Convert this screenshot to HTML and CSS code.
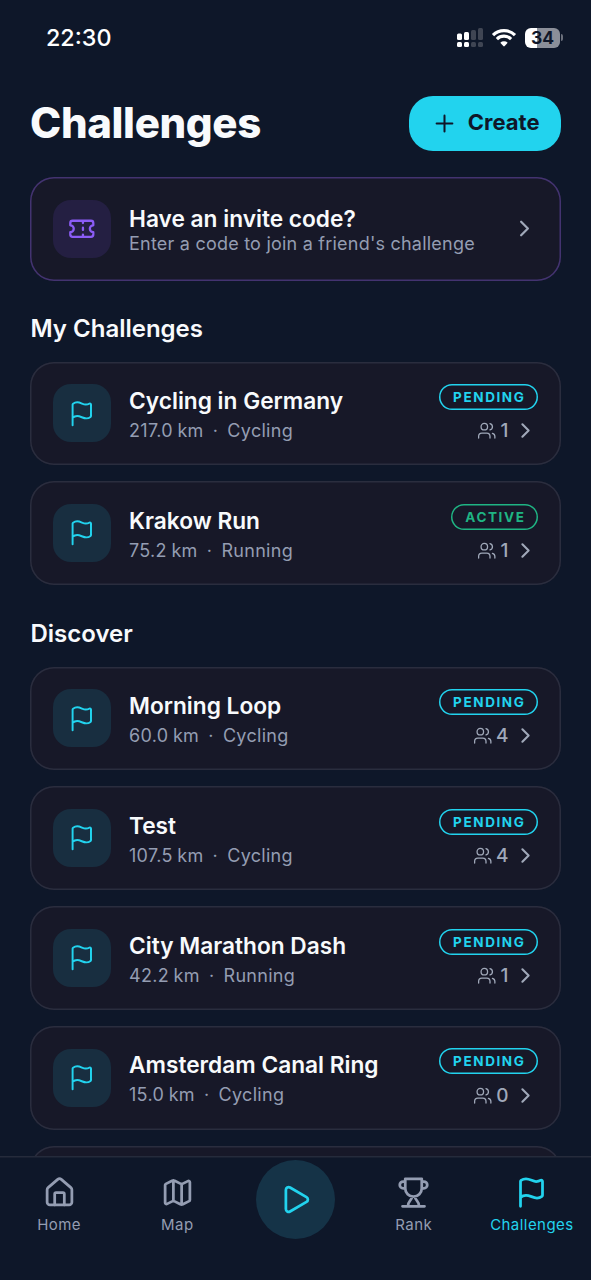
FILE: index.html
```html
<!DOCTYPE html>
<html lang="en">
<head>
<meta charset="utf-8">
<meta name="viewport" content="width=device-width">
<title>Challenges</title>
<link rel="stylesheet" href="styles.css">
</head>
<body>
<svg class="sprite" aria-hidden="true">
  <symbol id="flag" viewBox="0 0 24 24"><path d="M4 22V4a1 1 0 0 1 .4-.8A6 6 0 0 1 8 2c3 0 5 2 7.333 2q2 0 3.067-.8A1 1 0 0 1 20 4v10a1 1 0 0 1-.4.8A6 6 0 0 1 16 16c-3 0-5-2-8-2a6 6 0 0 0-4 1.528"/></symbol>
  <symbol id="ticket" viewBox="0 0 24 24"><path d="M2 9a3 3 0 0 1 0 6v2a2 2 0 0 0 2 2h16a2 2 0 0 0 2-2v-2a3 3 0 0 1 0-6V7a2 2 0 0 0-2-2H4a2 2 0 0 0-2 2ZM13 5v2M13 11v2M13 17v2"/></symbol>
  <symbol id="users" viewBox="0 0 24 24"><path d="M16 21v-2a4 4 0 0 0-4-4H6a4 4 0 0 0-4 4v2M16 3.128a4 4 0 0 1 0 7.744M22 21v-2a4 4 0 0 0-3-3.87"/><circle cx="9" cy="7" r="4"/></symbol>
  <symbol id="chevron" viewBox="0 0 24 24"><path d="m9 18 6-6-6-6"/></symbol>
  <symbol id="plus" viewBox="0 0 24 24"><path d="M5 12h14M12 5v14"/></symbol>
  <symbol id="home" viewBox="0 0 24 24"><path d="M15.500 21v-8a1 1 0 0 0-1-1h-5a1 1 0 0 0-1 1v8"/><path d="M3 10a2 2 0 0 1 .709-1.528l7-6a2 2 0 0 1 2.582 0l7 6A2 2 0 0 1 21 10v9a2 2 0 0 1-2 2H5a2 2 0 0 1-2-2z"/></symbol>
  <symbol id="map" viewBox="0 0 24 24"><path d="M14.106 5.553a2 2 0 0 0 1.788 0l3.659-1.83A1 1 0 0 1 21 4.619v12.764a1 1 0 0 1-.553.894l-4.553 2.277a2 2 0 0 1-1.788 0l-4.212-2.106a2 2 0 0 0-1.788 0l-3.659 1.83A1 1 0 0 1 3 19.381V6.618a1 1 0 0 1 .553-.894l4.553-2.277a2 2 0 0 1 1.788 0zM15 5.764v15M9 3.236v15"/></symbol>
  <symbol id="play" viewBox="0 0 24 24"><path d="M5 5a2 2 0 0 1 3.008-1.728l11.997 6.998a2 2 0 0 1 .003 3.458l-12 7A2 2 0 0 1 5 19z"/></symbol>
  <symbol id="trophy" viewBox="0 0 24 24"><path d="M11 15c-.2 1.500-.9 2.400-1.700 3.300S8 20.300 8 22M13 15c.2 1.500.9 2.400 1.700 3.300S16 20.300 16 22M18 9h1.500a2.500 2.500 0 0 0 0-5H18M4 22h16M6 9a6 6 0 0 0 12 0V2H6zM6 9H4.500a2.500 2.500 0 0 1 0-5H6"/></symbol>
</svg>

<div class="screen">
  <div class="status">
    <span class="clock">22:30</span>
    <div class="indicators">
      <svg class="signal" viewBox="0 0 26 19">
        <g fill="#fff"><rect x="0" y="5.500" width="5" height="6.500" rx="1.500"/><rect x="7" y="4" width="5" height="8" rx="1.500"/><rect x="0" y="14" width="5" height="5" rx="1.500"/><rect x="7" y="14" width="5" height="5" rx="1.500"/></g>
        <g fill="#3f4553"><rect x="14" y="2" width="5" height="10" rx="1.500"/><rect x="21" y="0" width="5" height="12" rx="1.500"/><rect x="14" y="14" width="5" height="5" rx="1.500"/><rect x="21" y="14" width="5" height="5" rx="1.500"/></g>
      </svg>
      <svg class="wifi" viewBox="0 0 24 18"><path d="M1 6.100a15.800 15.800 0 0 1 22 0M4.900 10.100a10.200 10.200 0 0 1 14.200 0"/><path class="dot" d="M8.300 13.800a5.400 5.400 0 0 1 7.400 0l-3 3.300a1 1 0 0 1-1.400 0z"/></svg>
      <div class="power"><div class="battery">34</div><i class="tip"></i></div>
    </div>
  </div>

  <main class="content">
    <header class="head">
      <h1>Challenges</h1>
      <button class="create"><svg class="icon plus"><use href="#plus"/></svg><span>Create</span></button>
    </header>

    <section class="card invite">
      <div class="tile violet"><svg class="icon"><use href="#ticket"/></svg></div>
      <div class="info"><h3>Have an invite code?</h3><p>Enter a code to join a friend's challenge</p></div>
      <svg class="icon go"><use href="#chevron"/></svg>
    </section>

    <h2>My Challenges</h2>
    <div class="list">
      <article class="card"><div class="tile"><svg class="icon"><use href="#flag"/></svg></div><div class="info"><h3>Cycling in Germany</h3><p>217.0 km&nbsp; ·&nbsp; Cycling</p></div><div class="side"><span class="badge">PENDING</span><div class="meta"><svg class="icon users"><use href="#users"/></svg><b>1</b><svg class="icon next"><use href="#chevron"/></svg></div></div></article>
      <article class="card"><div class="tile"><svg class="icon"><use href="#flag"/></svg></div><div class="info"><h3>Krakow Run</h3><p>75.2 km&nbsp; ·&nbsp; Running</p></div><div class="side"><span class="badge active">ACTIVE</span><div class="meta"><svg class="icon users"><use href="#users"/></svg><b>1</b><svg class="icon next"><use href="#chevron"/></svg></div></div></article>
    </div>

    <h2>Discover</h2>
    <div class="list">
      <article class="card"><div class="tile"><svg class="icon"><use href="#flag"/></svg></div><div class="info"><h3>Morning Loop</h3><p>60.0 km&nbsp; ·&nbsp; Cycling</p></div><div class="side"><span class="badge">PENDING</span><div class="meta"><svg class="icon users"><use href="#users"/></svg><b>4</b><svg class="icon next"><use href="#chevron"/></svg></div></div></article>
      <article class="card"><div class="tile"><svg class="icon"><use href="#flag"/></svg></div><div class="info"><h3>Test</h3><p>107.5 km&nbsp; ·&nbsp; Cycling</p></div><div class="side"><span class="badge">PENDING</span><div class="meta"><svg class="icon users"><use href="#users"/></svg><b>4</b><svg class="icon next"><use href="#chevron"/></svg></div></div></article>
      <article class="card"><div class="tile"><svg class="icon"><use href="#flag"/></svg></div><div class="info"><h3>City Marathon Dash</h3><p>42.2 km&nbsp; ·&nbsp; Running</p></div><div class="side"><span class="badge">PENDING</span><div class="meta"><svg class="icon users"><use href="#users"/></svg><b>1</b><svg class="icon next"><use href="#chevron"/></svg></div></div></article>
      <article class="card"><div class="tile"><svg class="icon"><use href="#flag"/></svg></div><div class="info"><h3>Amsterdam Canal Ring</h3><p>15.0 km&nbsp; ·&nbsp; Cycling</p></div><div class="side"><span class="badge">PENDING</span><div class="meta"><svg class="icon users"><use href="#users"/></svg><b>0</b><svg class="icon next"><use href="#chevron"/></svg></div></div></article>
      <article class="card"></article>
    </div>
  </main>

  <nav class="tabs">
    <a class="tab"><svg class="icon"><use href="#home"/></svg><span>Home</span></a>
    <a class="tab"><svg class="icon"><use href="#map"/></svg><span>Map</span></a>
    <a class="tab play"><span class="disc"><svg class="icon"><use href="#play"/></svg></span></a>
    <a class="tab"><svg class="icon"><use href="#trophy"/></svg><span>Rank</span></a>
    <a class="tab current"><svg class="icon"><use href="#flag"/></svg><span>Challenges</span></a>
  </nav>
</div>
</body>
</html>
```

FILE: styles.css
```css
* { box-sizing: border-box; }
body { margin: 0; background: #0e1729; color: #f8fafc; font-family: Inter, "Liberation Sans", sans-serif; }
h1, h2, h3, p { margin: 0; white-space: nowrap; }
.sprite { display: none; }
.icon { display: block; flex: none; fill: none; stroke: currentColor; stroke-width: 2; stroke-linecap: round; stroke-linejoin: round; }

.screen { display: flex; flex-direction: column; width: 591px; height: 1280px; overflow: hidden; }

.status { flex: none; display: flex; justify-content: space-between; align-items: center; height: 75px; padding: 0 28px 0 46px; }
.clock { font-size: 23.300px; font-weight: 500; line-height: 28px; color: #fff; }
.indicators { display: flex; align-items: center; gap: 9px; }
.signal { width: 26px; height: 19px; }
.wifi { width: 24px; height: 18px; overflow: visible; fill: none; stroke: #fff; stroke-width: 3.2; }
.wifi .dot { fill: #fff; stroke: none; }
.power { display: flex; align-items: center; gap: 1px; }
.battery { width: 35px; height: 20px; border-radius: 6px; background: linear-gradient(90deg, #fff 34%, #8b8f99 34%); color: #0f1729; font-size: 17.500px; font-weight: 700; line-height: 20px; text-align: center; }
.tip { width: 2px; height: 7px; border-radius: 0 2px 2px 0; background: #6b707c; }

.content { flex: 1; min-height: 0; overflow: hidden; padding: 20px 30.500px 0 30px; }
.head { display: flex; justify-content: space-between; align-items: center; height: 56px; }
h1 { font-size: 42px; font-weight: 800; line-height: 56px; letter-spacing: -.35px; }
.create { display: flex; align-items: center; gap: 10px; height: 55px; margin-top: 0; padding: 0 21px 0 22px; border: 0; border-radius: 24px; background: #22d3ee; color: #0f1729; font: 700 22px/26px Inter, sans-serif; }
.plus { width: 27px; height: 27px; stroke-width: 1.8; }
.create span { margin-top: -2px; }

h2 { margin: 32px 0 17px; padding-left: .500px; font-size: 24px; font-weight: 600; line-height: 32px; }
.list { display: flex; flex-direction: column; gap: 16px; }
.list + h2 { margin: 32.500px 0 17px; }
.card { flex: none; display: flex; align-items: center; height: 103.800px; padding: 0 22.500px 0 23px; border-radius: 24px; background: #171828; box-shadow: inset 0 0 0 1.500px #2a2d3e; }
.invite { height: 103.500px; margin-top: 26px; box-shadow: inset 0 0 0 1.500px #433370; }
.tile { flex: none; display: flex; align-items: center; justify-content: center; width: 58px; height: 58px; border-radius: 18px; background: #182e40; color: #22d3ee; }
.tile .icon { width: 27.600px; height: 27.600px; stroke-width: 1.700; }
.violet { background: #241f42; color: #8b5cf6; }
.violet .icon { stroke-width: 2; }
.info { flex: 1; margin: 4px 0 0 18px; }
h3 { font-size: 22.700px; font-weight: 620; line-height: 30px; }
p { font-size: 18px; line-height: 29px; letter-spacing: .3px; word-spacing: -.8px; color: #949db2; }
.invite .info { margin-top: 1px; }
.invite p { line-height: 20px; letter-spacing: .22px; word-spacing: 0; }
.go { width: 27px; height: 27px; color: #a0a8b9; }
.side { display: flex; flex-direction: column; align-items: flex-end; gap: 9px; }
.badge { height: 26px; padding: 0 12.500px 0 14px; border-radius: 13px; box-shadow: inset 0 0 0 1.500px #22d3ee; color: #22d3ee; font-size: 13.500px; font-weight: 750; line-height: 26px; letter-spacing: 1.600px; }
.active { box-shadow: inset 0 0 0 1.500px #1fb483; color: #1fb483; }
.meta { display: flex; align-items: center; height: 24px; color: #a0a8b9; }
.meta b { margin: 0 4.500px 0 4px; font-size: 19px; font-weight: 500; }
.users { width: 19.500px; height: 19.500px; stroke-width: 1.600; }
.next { width: 25px; height: 25px; }

.tabs { flex: none; display: grid; grid-template-columns: repeat(5, 1fr); height: 124px; box-shadow: inset 0 1.500px #252b3b; background: #0e1729; color: #949db2; }
.tab { display: flex; flex-direction: column; align-items: center; padding-top: 20px; }
.tab .icon { width: 33px; height: 33px; }
.tab span { font-size: 15px; font-weight: 400; line-height: 20px; margin-top: 6px; letter-spacing: .45px; }
.current { color: #22d3ee; }
.tab.play { padding-top: 4px; color: #22d3ee; }
.tab .disc { display: flex; align-items: center; justify-content: center; width: 79px; height: 79px; margin: 0; border-radius: 50%; background: #153347; }
```
